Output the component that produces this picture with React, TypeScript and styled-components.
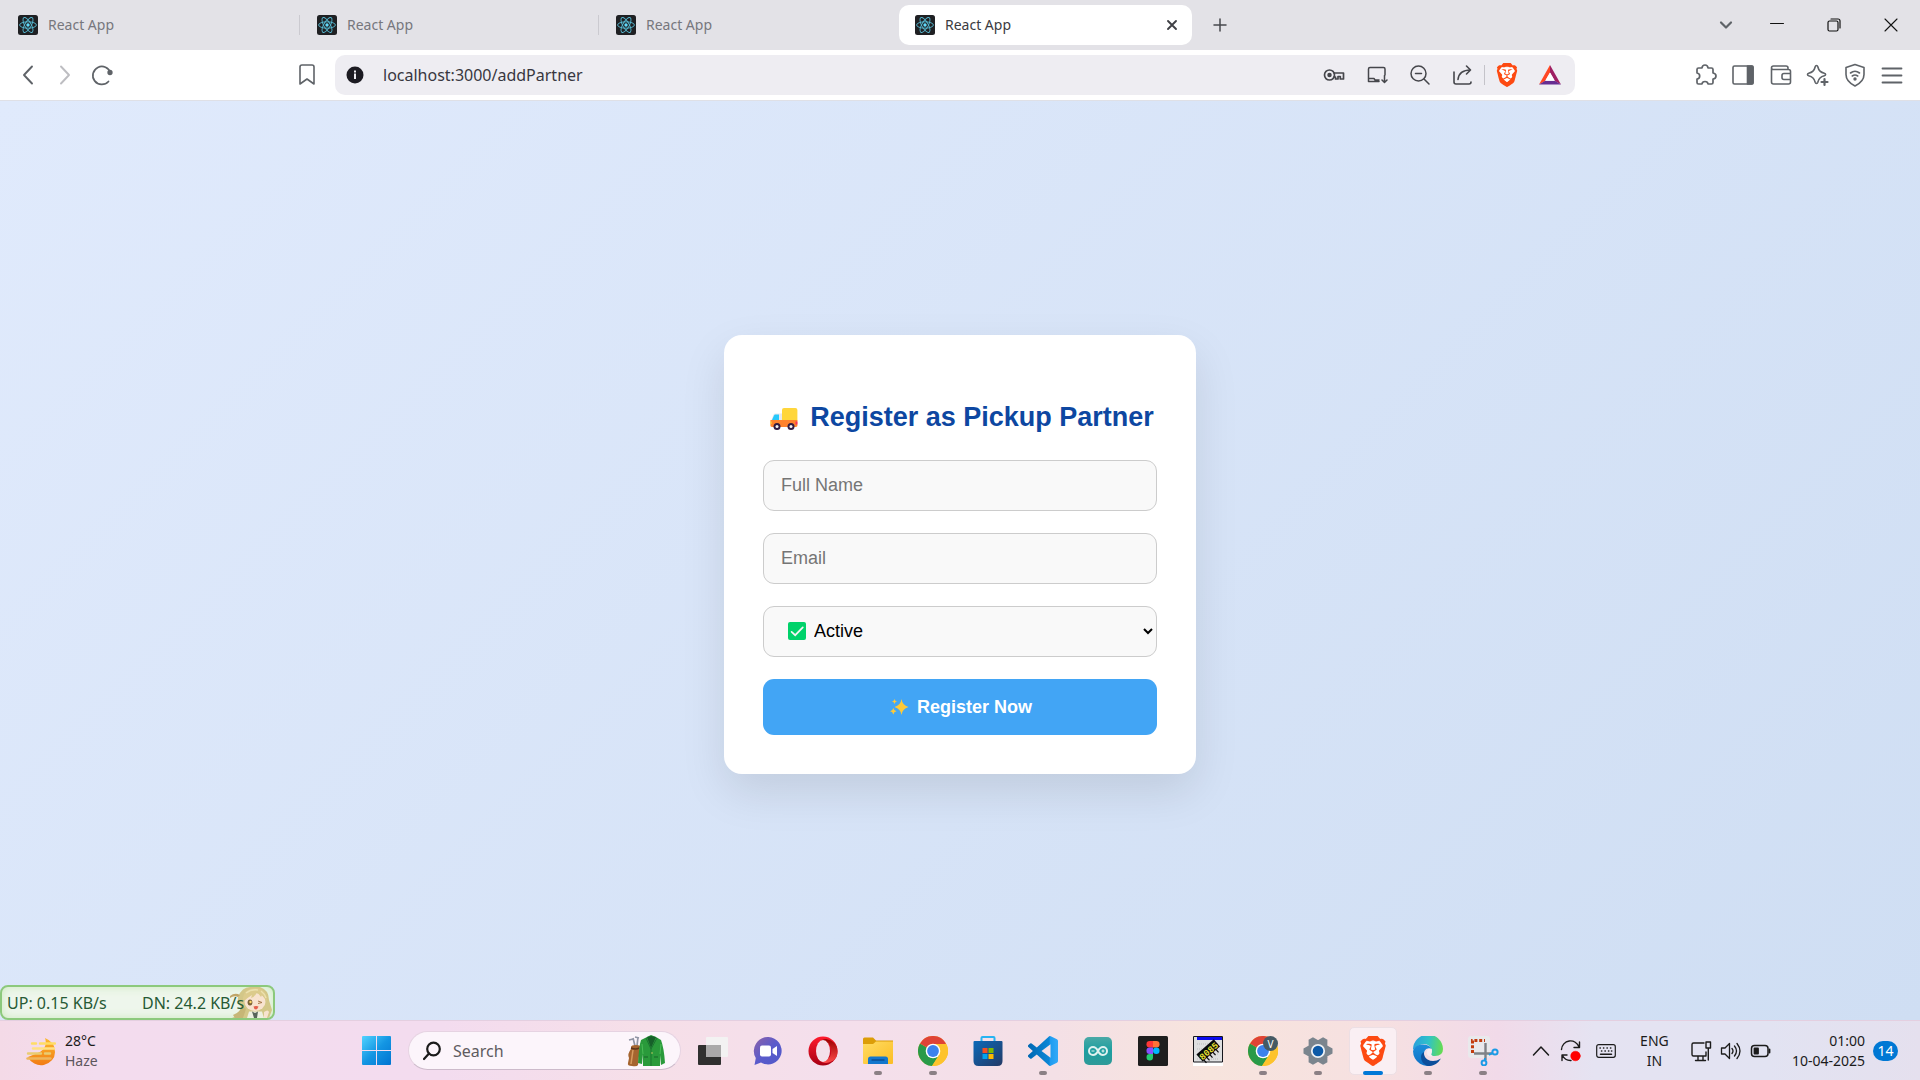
import React, { useState } from 'react';
import styled, { createGlobalStyle } from 'styled-components';
import { SiBrave } from 'react-icons/si';

const GlobalStyle = createGlobalStyle`
  *, *::before, *::after { box-sizing: border-box; }
  body { margin: 0; font-family: "Noto Sans", "Open Sans", sans-serif; }
  button { border: 0; padding: 0; background: none; color: inherit; font: inherit; cursor: pointer; }
  svg { display: block; flex: none; }
`;

const Screen = styled.div`
  display: flex;
  flex-direction: column;
  min-height: 100vh;
`;

/* ---------- browser chrome ---------- */

const TabStrip = styled.header`
  display: flex;
  align-items: center;
  height: 50px;
  padding: 0 1px 0 2px;
  background: #e3e2e7;
  color: #5f6368;
`;

const Tab = styled.div<{ $active?: boolean }>`
  display: flex;
  align-items: center;
  flex: 0 1 293px;
  min-width: 0;
  height: 40px;
  padding: 0 12px 0 16px;
  border-radius: 10px;
  background: ${p => (p.$active ? '#fff' : 'transparent')};
  color: ${p => (p.$active ? '#3b3b41' : '#77777d')};
`;

const TabTitle = styled.button`
  display: flex;
  align-items: center;
  gap: 10px;
  flex: 1;
  font-size: 14px;
  line-height: 20px;
`;

const TabDivider = styled.span<{ $hidden?: boolean }>`
  width: 1px;
  height: 20px;
  margin: 0 1px 0 4px;
  background: ${p => (p.$hidden ? 'transparent' : '#cbcad0')};
`;

const IconButton = styled.button<{ $w?: number; $color?: string }>`
  display: flex;
  align-items: center;
  justify-content: center;
  width: ${p => p.$w ?? 37}px;
  height: 40px;
  flex: none;
  color: ${p => p.$color ?? '#5f6368'};
`;

const CloseTab = styled(IconButton)`
  width: 16px;
  height: 20px;
`;

const WindowControls = styled.div`
  display: flex;
  margin-left: auto;
`;

const Toolbar = styled.nav`
  display: grid;
  grid-template-columns: 1fr minmax(0, 1240px) 1fr;
  align-items: center;
  height: 51px;
  padding-right: 10px;
  border-bottom: 1px solid #dfe0e6;
  background: #fff;
`;

const ToolGroup = styled.div<{ $end?: boolean }>`
  display: flex;
  align-items: center;
  justify-content: ${p => (p.$end ? 'flex-end' : 'flex-start')};
  padding: ${p => (p.$end ? '0' : '0 10px 0 9px')};
`;

const Spacer = styled.span`
  flex: 1;
`;

const AddressBar = styled.div`
  display: flex;
  align-items: center;
  height: 40px;
  padding: 0 4px 0 11px;
  border-radius: 10px;
  background: #eeedf2;
`;

const AddressInput = styled.input`
  flex: 1;
  min-width: 0;
  margin-left: 19px;
  padding: 0;
  border: 0;
  outline: 0;
  background: transparent;
  color: #38373f;
  font: 16px/24px "Noto Sans", "Open Sans", sans-serif;
`;

const BarDivider = styled.span`
  width: 1px;
  height: 20px;
  background: #c4c3c9;
`;

/* ---------- registration page ---------- */

const Page = styled.main`
  position: relative;
  display: flex;
  flex: 1;
  align-items: center;
  justify-content: center;
  padding: 24px 16px 36px;
  background: linear-gradient(135deg, #e0eafc, #cfdef3);
  font-family: "Liberation Sans", Arial, sans-serif;
`;

const Card = styled.form`
  display: flex;
  flex-direction: column;
  gap: 22px;
  width: 100%;
  max-width: 472px;
  padding: 39px;
  border-radius: 18px;
  background: #fff;
  box-shadow: 0 18px 45px rgba(0, 0, 0, 0.1);
`;

const Title = styled.h2`
  display: flex;
  align-items: center;
  justify-content: center;
  gap: 8px;
  margin: 25px 0 3px;
  color: #0d47a1;
  font-size: 27px;
  line-height: 36px;
  font-weight: 700;
  white-space: nowrap;
`;

const Field = styled.input`
  width: 100%;
  height: 51px;
  padding: 0 17px 1px;
  border: 1px solid #ccc;
  border-radius: 11px;
  background: #f9f9f9;
  color: #000;
  font: 18px "Liberation Sans", Arial, sans-serif;
  &::placeholder { color: #757575; }
`;

const SelectBox = styled.div`
  position: relative;
`;

const SelectMark = styled.span`
  position: absolute;
  top: 16px;
  left: 25px;
  pointer-events: none;
`;

const StatusSelect = styled.select`
  width: 100%;
  height: 51px;
  padding: 0 1px 1px 46px;
  border: 1px solid #ccc;
  border-radius: 11px;
  background: #f9f9f9;
  color: #000;
  font: 18px "Liberation Sans", Arial, sans-serif;
`;

const SubmitButton = styled.button`
  display: flex;
  align-items: center;
  justify-content: center;
  gap: 8px;
  height: 56px;
  padding-left: 2px;
  border-radius: 11px;
  background: #42a5f5;
  color: #fff;
  font: 700 18px "Liberation Sans", Arial, sans-serif;
`;

const NetMeter = styled.aside`
  position: absolute;
  left: 0;
  bottom: 0;
  display: flex;
  align-items: center;
  width: 275px;
  height: 35px;
  padding-left: 5px;
  border: 2px solid #8cc97c;
  border-radius: 8px;
  background: #eef6ec;
  box-shadow: inset 0 0 10px #cdeabf;
  color: #275a35;
  font: 16px/24px "Noto Sans", "Open Sans", sans-serif;
  white-space: nowrap;
  overflow: hidden;
`;

const NetValue = styled.span`
  position: relative;
  z-index: 1;
  flex: 0 0 135px;
`;

const Mascot = styled.svg`
  position: absolute;
  right: 0;
  bottom: 0;
`;

/* ---------- taskbar ---------- */

const Taskbar = styled.footer`
  display: flex;
  align-items: center;
  height: 60px;
  border-top: 1px solid #e4cfe0;
  background: linear-gradient(90deg, #f4dae7 0%, #f3dcee 5%, #f3dcef 23%, #f6dfe8 34%, #f4dfec 44%, #f4e0e6 55%, #f7e4dd 63%, #f6e0e1 72%, #f1dae9 78%, #e5e3f2 83%, #e2e3f2 92%, #e5e0ee 100%);
  color: #1b1b1b;
  font-size: 14px;
  line-height: 20px;
`;

const Weather = styled.button`
  display: flex;
  align-items: center;
  gap: 9px;
  flex: 0 0 349px;
  height: 100%;
  padding-left: 26px;
  text-align: left;
`;

const Stack = styled.span<{ $align?: string }>`
  display: flex;
  flex-direction: column;
  text-align: ${p => p.$align ?? 'left'};
`;

const Muted = styled.span`
  color: #5c565c;
`;

const AppCell = styled.button<{ $mark?: 'open' | 'active' }>`
  position: relative;
  display: flex;
  align-items: center;
  justify-content: center;
  flex: 0 1 55px;
  height: 48px;
  &::after {
    content: '';
    position: absolute;
    bottom: 0;
    width: ${p => (p.$mark === 'active' ? 20 : 8)}px;
    height: 4px;
    border-radius: 2px;
    background: ${p => (p.$mark === 'active' ? '#0078d7' : p.$mark ? '#8b8085' : 'transparent')};
  }
`;

const ActiveTile = styled.span`
  display: flex;
  align-items: center;
  justify-content: center;
  width: 48px;
  height: 48px;
  border: 1px solid #ecdfe4;
  border-radius: 5px;
  background: #faeff3;
`;

const SearchPill = styled.label`
  display: flex;
  align-items: center;
  flex: 0 1 273px;
  min-width: 0;
  height: 39px;
  margin: 0 4px;
  padding: 0 15px 0 14px;
  border: 1px solid #e6d3e2;
  border-bottom-color: #cdbbcb;
  border-radius: 20px;
  background: #fcf5fb;
`;

const SearchInput = styled.input`
  flex: 1;
  min-width: 0;
  margin-left: 12px;
  padding: 0;
  border: 0;
  outline: 0;
  background: transparent;
  font: 16px/24px "Noto Sans", "Open Sans", sans-serif;
  &::placeholder { color: #5f5b60; }
`;

const Tray = styled.div`
  display: flex;
  align-items: center;
  margin-left: auto;
  padding-right: 22px;
`;

const TrayButton = styled.button<{ $w: number }>`
  display: flex;
  align-items: center;
  justify-content: center;
  width: ${p => p.$w}px;
  height: 48px;
`;

const Clock = styled.button`
  margin: 0 8px 0 16px;
`;

const Badge = styled.button`
  width: 25px;
  height: 20px;
  border-radius: 10px;
  background: #0078d4;
  color: #fff;
  font-size: 14px;
  line-height: 20px;
`;

/* ---------- drawings ---------- */

const ReactIcon = () => (
  <svg width="20" height="20" viewBox="0 0 20 20">
    <rect width="20" height="20" rx="2.5" fill="#1f2023" />
    <g fill="none" stroke="#58bdd6" strokeWidth="0.9">
      <ellipse cx="10" cy="10" rx="8.4" ry="3.2" />
      <ellipse cx="10" cy="10" rx="8.4" ry="3.2" transform="rotate(60 10 10)" />
      <ellipse cx="10" cy="10" rx="8.4" ry="3.2" transform="rotate(120 10 10)" />
    </g>
    <circle cx="10" cy="10" r="1.7" fill="#61dafb" />
  </svg>
);

type LineProps = { w?: number; h?: number; sw?: number; children: React.ReactNode };
const Line = ({ w = 24, h = 24, sw = 1.6, children }: LineProps) => (
  <svg width={w} height={h} viewBox={`0 0 ${w} ${h}`} fill="none" stroke="currentColor" strokeWidth={sw} strokeLinecap="round" strokeLinejoin="round">
    {children}
  </svg>
);

const BatIcon = () => (
  <svg width="24" height="22" viewBox="0 0 24 22">
    <path d="M12 1 1 20.5l6.2-3.6L12 8.5z" fill="#ff4724" />
    <path d="M12 1v7.5l4.8 8.4 6.2 3.6z" fill="#9e1f63" />
    <path d="M1 20.5h22l-6.2-3.8H7.2z" fill="#662d91" />
    <path d="M12 8.5 7.2 16.8h9.6z" fill="#fff" />
  </svg>
);

/* The lion of SiBrave is a cut-out, so a white plate behind it fills the face. */
const Brave = ({ size }: { size: number }) => (
  <svg width={size} height={size} viewBox="0 0 24 24">
    <path d="M6 4.500h12l2 4-2.500 9L12 21.500 6.500 17.500 4 8.500z" fill="#fff" />
    <SiBrave size={24} color="#fd4a12" />
  </svg>
);

const Truck = () => (
  <svg width="36" height="28" viewBox="0 0 36 28">
    <path d="M5 18 7.3 12q.6-1.4 2-1.4H17V19H5z" fill="#e8e8ee" />
    <path d="M5.8 17.5 8 12.4q.4-.9 1.3-.9H13v6z" fill="#26c9fc" />
    <rect x="16" y="5" width="15.400" height="14" rx="2" fill="#ffd63b" />
    <path d="M4.400 17h27v5.600q0 1.400-1.400 1.400H5.800q-1.400 0-1.400-1.400z" fill="#ff822d" />
    <path d="M29.500 18.500h1.900v3h-1.900z" fill="#f92f60" />
    <path d="M4.400 18.500h1.200v2.500H4.400z" fill="#fcd53f" />
    <circle cx="11" cy="23.500" r="3.500" fill="#321b41" />
    <circle cx="11" cy="23.500" r="1.500" fill="#f4f4f4" />
    <circle cx="25" cy="23.500" r="3.500" fill="#321b41" />
    <circle cx="25" cy="23.500" r="1.500" fill="#f4f4f4" />
  </svg>
);

const CheckMark = () => (
  <svg width="18" height="18" viewBox="0 0 18 18">
    <rect width="18" height="18" rx="2" fill="#00d26a" />
    <path d="m3.600 9.800 3.600 3.400 7.600-7.800" fill="none" stroke="#f4f4f4" strokeWidth="1.700" strokeLinecap="round" />
  </svg>
);

const Sparkles = () => (
  <svg width="19" height="18" viewBox="0 0 19 18" fill="#fcc93a">
    <path d="M11.500 1q.8 6.200 7 8-6.200 1.800-7 8-.8-6.200-7-8 6.200-1.800 7-8z" />
    <path d="M4.500 1q.4 2.100 2.500 2.500-2.100.4-2.500 2.500Q4.100 3.900 2 3.500 4.100 3.100 4.500 1zM3.300 10q.6 2.700 3.200 3.200-2.600.5-3.200 3.300-.5-2.800-3.200-3.300Q2.800 12.700 3.300 10z" />
  </svg>
);

const MascotDrawing = () => (
  <Mascot width="44" height="31" viewBox="0 0 44 31" aria-hidden="true">
    <path d="M9 10Q13 0 21 0h10q9 3 9 13l3 10-3 8H3q8-3 9-11-4-4-3-10z" fill="#d3c788" />
    <path d="M1 9q5-4 10-1l-2 2q-4-2-8 1z" fill="#c0a568" />
    <path d="M4 28q8-3 9-10l4 4-3 9H6z" fill="#c6b676" />
    <ellipse cx="26" cy="15" rx="10.500" ry="9" fill="#f8e3cf" />
    <path d="M14 15q-1-13 12-14 12 0 12 14-2-5-5-7l-1 2-4-5q-2 5-6 6l1-3q-5 3-9 7z" fill="#dccb8c" />
    <path d="M17 6q5-4 12-3M32 4q4 3 5 7" stroke="#ece1ae" strokeWidth="1.500" fill="none" />
    <ellipse cx="21" cy="15.500" rx="2.400" ry="3" fill="#7b6237" />
    <circle cx="21.500" cy="15" r="1.200" fill="#ffd96a" />
    <path d="m29 14 4 1.500-4 1" fill="none" stroke="#a87949" />
    <path d="M24.500 19.500q3-1 5 0-1 3-2.700 3t-2.300-3z" fill="#e45e4d" />
    <path d="M20 24.500h13l2 6.500H18z" fill="#eef0e0" />
    <path d="m23 24.500 3 1.500 3-1.500-1 6.500h-3z" fill="#576459" />
    <path d="M35 25q4-3 5 0l-2 6h-3z" fill="#f8e3cf" />
  </Mascot>
);

const WeatherIcon = () => (
  <svg width="30" height="30" viewBox="0 0 30 30">
    <defs>
      <linearGradient id="haze" x1="0" y1="0" x2="0" y2="1">
        <stop offset="0" stopColor="#fbb92f" />
        <stop offset="1" stopColor="#f27c14" />
      </linearGradient>
    </defs>
    <path d="M19 2q10 4 10 14a14 13 0 0 1-27 5l12-5q8-5 5-14z" fill="url(#haze)" />
    <g strokeLinecap="round" strokeWidth="2.400">
      <path d="M6 7.500h4M14 7.500h15" stroke="#ffdd65" />
      <path d="M7 12.500h21" stroke="#ffe184" />
      <path d="M2 17.500h13M19 17.500h5" stroke="#e9cc72" />
      <path d="M1.500 22.500h23" stroke="#eeb65d" />
    </g>
  </svg>
);

const StartIcon = () => (
  <svg width="29" height="29" viewBox="0 0 29 29">
    <defs>
      <linearGradient id="win" x1="0" y1="0" x2="1" y2="1">
        <stop offset="0" stopColor="#52d3ff" />
        <stop offset="0.5" stopColor="#1496e3" />
        <stop offset="1" stopColor="#0074d1" />
      </linearGradient>
    </defs>
    <path d="M1 0h13v14H0V1q0-1 1-1zM15 0h13q1 0 1 1v13H15zM0 15h14v14H1q-1 0-1-1zM15 15h14v13q0 1-1 1H15z" fill="url(#win)" />
  </svg>
);

const GolfIcon = () => (
  <svg width="38" height="32" viewBox="0 0 38 32">
    <path d="m8 11-2-8M10 11l1-9M6 4 2 5M12 3l-4-1" stroke="#9195a5" strokeWidth="1.700" fill="none" />
    <path d="M4 12q0-2 5-2t4 2l-2 18q-1 2-6 1-5 0-4-3l1-5q-2-4 2-9z" fill="#a5642f" />
    <path d="M4 13q5 2 8 0" stroke="#5e351b" strokeWidth="1.600" fill="none" />
    <path d="M6 15 4 29" stroke="#d79a5f" strokeWidth="1.500" />
    <path d="m20 2 4-2 5 2 5 3q3 8 4 23l-4 2-1-10v11H16V19l-1 10-4-1q1-17 3-23z" fill="#2a9a3b" />
    <path d="m20 2 4 11 5-11-5-1z" fill="#17602a" />
    <path d="m19 3 5 11 6-11M24 14v17" stroke="#1b7430" fill="none" />
    <path d="M17 22h4M27 22h4" stroke="#176429" />
    <path d="m15 9 1 10M34 9l-1 10" stroke="#4bbd57" fill="none" />
    <circle cx="25" cy="18" r=".7" fill="#efd66d" />
  </svg>
);

const TaskViewIcon = () => (
  <svg width="30" height="30" viewBox="0 0 30 30">
    <rect y="9" width="23" height="20" rx="1" fill="#30302f" />
    <rect x="8" y="1" width="22" height="20" rx="1" fill="#f3f2f2" />
    <path d="M8 9h15v12H8z" fill="#aaa9a9" />
  </svg>
);

const ChatIcon = () => (
  <svg width="30" height="30" viewBox="0 0 30 30">
    <defs>
      <linearGradient id="chat" x1="0" y1="0" x2="1" y2="1">
        <stop offset="0" stopColor="#8d62a8" />
        <stop offset="0.5" stopColor="#5a5bcb" />
        <stop offset="1" stopColor="#5059c9" />
      </linearGradient>
    </defs>
    <path d="M15.500 1A13.700 13.700 0 1 1 8 26.500L1.500 29l1.300-7A14 14 0 0 1 15.500 1z" fill="url(#chat)" />
    <rect x="7" y="9.500" width="11" height="11" rx="2" fill="#fff" />
    <path d="m19.500 13 4.500-3v10l-4.500-3z" fill="#fff" />
  </svg>
);

const OperaIcon = () => (
  <svg width="30" height="30" viewBox="0 0 30 30">
    <defs>
      <linearGradient id="opA" x1="0" y1="0" x2="0" y2="1">
        <stop offset="0" stopColor="#ff1b2d" />
        <stop offset="1" stopColor="#a70014" />
      </linearGradient>
      <linearGradient id="opB" x1="0" y1="0" x2="0" y2="1">
        <stop offset="0" stopColor="#9c0000" />
        <stop offset="1" stopColor="#ff4b4b" />
      </linearGradient>
    </defs>
    <ellipse cx="15" cy="15" rx="14.500" ry="14.500" fill="url(#opA)" />
    <path d="M11 6.500Q14 3 18 3q11 2 11.500 12T18 27q-4 0-7-3.500 7 2.500 11-3 2.500-5.500 0-11-4-5.500-11-3z" fill="url(#opB)" />
    <ellipse cx="15" cy="15" rx="7" ry="11" fill="#f4e0ea" />
  </svg>
);

const FolderIcon = () => (
  <svg width="30" height="28" viewBox="0 0 30 28">
    <defs>
      <linearGradient id="fold" x1="0" y1="0" x2="1" y2="1">
        <stop offset="0" stopColor="#ffdc63" />
        <stop offset="1" stopColor="#fbbd24" />
      </linearGradient>
    </defs>
    <path d="M0 2q0-1.500 1.500-1.500H10l3 3H30v10H0z" fill="#dc9d08" />
    <path d="M0 7h10l3-2.500h17V26q0 1-1 1H1q-1 0-1-1z" fill="url(#fold)" />
    <path d="M5 27v-5q0-2.500 2.500-2.500h15Q25 19.500 25 22v5z" fill="#1377cd" />
    <path d="M9 23h12" stroke="#0b4f94" strokeWidth="1.400" strokeLinecap="round" />
  </svg>
);

const ChromeIcon = ({ badge }: { badge?: string }) => (
  <svg width="30" height="30" viewBox="0 0 30 30">
    <circle cx="15" cy="15" r="15" fill="#fdc32c" />
    <path d="M15 15 2 7.500A15 15 0 0 0 14 30l7.500-11z" fill="#299a48" />
    <path d="M15 15 2 7.500a15 15 0 0 1 26 0z" fill="#df4336" />
    <path d="M15 8h13.300A15 15 0 0 1 14 30l7.500-12z" fill="#fdc32c" />
    <circle cx="15" cy="15" r="7.300" fill="#fff" />
    <circle cx="15" cy="15" r="5.900" fill="#3b82ed" />
    {badge && (
      <>
        <circle cx="22.500" cy="7.500" r="7.500" fill="#455a64" />
        <text x="22.500" y="11.500" textAnchor="middle" fontSize="10" fill="#fff" fontFamily="Noto Sans, sans-serif">{badge}</text>
      </>
    )}
  </svg>
);

const StoreIcon = () => (
  <svg width="30" height="30" viewBox="0 0 30 30">
    <defs>
      <linearGradient id="store" x1="0" y1="0" x2="1" y2="1">
        <stop offset="0" stopColor="#0b69b8" />
        <stop offset="1" stopColor="#243a66" />
      </linearGradient>
    </defs>
    <path d="M8.500 7V2q0-1 1-1h11q1 0 1 1v5" fill="none" stroke="#27b4f2" strokeWidth="2" />
    <path d="M.5 6q0-1 1-1h27q1 0 1 1v19q0 5-5 5h-19q-5 0-5-5z" fill="url(#store)" />
    <path d="M9.500 12h5v5h-5z" fill="#f25022" />
    <path d="M15.500 12h5v5h-5z" fill="#7fba00" />
    <path d="M9.500 18h5v5h-5z" fill="#00a4ef" />
    <path d="M15.500 18h5v5h-5z" fill="#ffb900" />
  </svg>
);

const CodeIcon = () => (
  <svg width="30" height="30" viewBox="0 0 24 24">
    <defs>
      <linearGradient id="code" x1="0" x2="1">
        <stop offset="0" stopColor="#0068b3" />
        <stop offset="0.7" stopColor="#0a86d6" />
        <stop offset="0.75" stopColor="#1f9cf0" />
        <stop offset="1" stopColor="#33a9f8" />
      </linearGradient>
    </defs>
    <path
      fill="url(#code)"
      d="M23.15 2.587L18.21.21a1.494 1.494 0 0 0-1.705.29l-9.46 8.63-4.12-3.128a.999.999 0 0 0-1.276.057L.327 7.261A1 1 0 0 0 .326 8.74L3.899 12 .326 15.26a1 1 0 0 0 .001 1.479L1.65 17.94a.999.999 0 0 0 1.276.057l4.12-3.128 9.46 8.63a1.492 1.492 0 0 0 1.704.29l4.942-2.377A1.5 1.5 0 0 0 24 20.06V3.939a1.5 1.5 0 0 0-.85-1.352zm-5.146 14.861L10.826 12l7.178-5.448v10.896z"
    />
  </svg>
);

const ArduinoIcon = () => (
  <svg width="28" height="28" viewBox="0 0 28 28">
    <defs>
      <linearGradient id="ard" x1="0" y1="0" x2="0" y2="1">
        <stop offset="0" stopColor="#4aa9a6" />
        <stop offset="0.5" stopColor="#1c9ea0" />
        <stop offset="1" stopColor="#2f9a98" />
      </linearGradient>
    </defs>
    <rect width="28" height="28" rx="5" fill="url(#ard)" />
    <path d="M14 14q-2-4-5-4a4 4 0 0 0 0 8q3 0 5-4t5-4a4 4 0 0 1 0 8q-3 0-5-4z" fill="none" stroke="#dff1ef" strokeWidth="2" />
    <path d="M7.500 14h3M17.500 14h3M19 12.500v3" stroke="#dff1ef" strokeWidth="1.200" />
  </svg>
);

const FigmaIcon = () => (
  <svg width="30" height="30" viewBox="0 0 30 30">
    <rect width="30" height="30" rx="1.500" fill="#1e1e1e" />
    <path d="M15 5h-3.300a3.250 3.250 0 0 0 0 6.500H15z" fill="#ff3737" />
    <path d="M15 5h3.300a3.250 3.250 0 0 1 0 6.500H15z" fill="#ff7237" />
    <path d="M15 11.500h-3.300a3.250 3.250 0 0 0 0 6.500H15z" fill="#874fff" />
    <circle cx="18.300" cy="14.750" r="3.250" fill="#00b6ff" />
    <path d="M15 18h-3.300a3.250 3.250 0 1 0 3.300 3.250z" fill="#24cb71" />
  </svg>
);

const ChipIcon = () => (
  <svg width="30" height="30" viewBox="0 0 30 30">
    <path d="M0 0h30v30H0z" fill="#fff" />
    <path d="M.5.5h29v25.500H.5z" fill="#dedfe0" stroke="#16161c" />
    <path d="M4 1h25v3H4z" fill="#0b0bee" />
    <path d="M4 8h22M4 13h22M4 18h22M4 23h22" stroke="#b9bbbd" strokeDasharray="1 1" />
    <g transform="rotate(-41 15 15)">
      <path d="M4 10h23v9.500H4z" fill="#08080a" />
      <path d="M6 18v5M10 18v5M14 18v5M18 18v5M22 18v5" stroke="#08080a" strokeWidth="1.200" />
      <text x="15.500" y="18.500" textAnchor="middle" fontSize="9" fontWeight="700" fill="#e8e332" fontFamily="Liberation Mono, monospace">8085</text>
    </g>
  </svg>
);

const GearIcon = () => (
  <svg width="30" height="30" viewBox="0 0 30 30">
    <g fill="#7b858e">
      <circle cx="15" cy="15" r="11" />
      {[0, 60, 120].map(a => (
        <path key={a} d="M.5 12.500 5 10h20l4.500 2.500v5L25 20H5L.5 17.500z" transform={`rotate(${a} 15 15)`} />
      ))}
    </g>
    <circle cx="15" cy="15" r="6.200" fill="#0d5aa7" stroke="#eef1f4" strokeWidth="1.800" />
  </svg>
);

const EdgeIcon = () => (
  <svg width="30" height="30" viewBox="0 0 30 30">
    <defs>
      <linearGradient id="edT" x1="0" y1="0.4" x2="1" y2="0.5">
        <stop offset="0" stopColor="#2aa0dd" />
        <stop offset="0.5" stopColor="#2fc2c8" />
        <stop offset="1" stopColor="#66dc50" />
      </linearGradient>
      <linearGradient id="edL" x1="0" y1="0" x2="0" y2="1">
        <stop offset="0" stopColor="#1c8fdb" />
        <stop offset="1" stopColor="#1070c4" />
      </linearGradient>
    </defs>
    <path d="M0 14A15 15 0 0 1 30 13q0 7-8 7-4 0-4-2 2-3 0-6-4-6-11-3-5 2-7 5z" fill="url(#edT)" />
    <path d="M0 15Q2 8.500 9.500 8.500 17 8.500 18.500 13q-5-2-7 2-2 6 3 10 3 3 7 3.500A15 15 0 0 1 0 15z" fill="url(#edL)" />
    <path d="M11 16q-.5 5 3.500 7.500 6 3.500 13.500-1-5 8-13 7.500-7-2.500-7-9 0-3.500 3-5z" fill="#0d4f9b" />
    <path d="M14 14.500q2-3 4.500-1.500 1 2 0 4.500-1 1.500 1 2.700-4 .8-5.500-2-.7-2 0-3.700z" fill="#f7ecf2" />
  </svg>
);

const SnipIcon = () => (
  <svg width="32" height="30" viewBox="0 0 32 30">
    <rect x="1" width="22" height="22" rx="3" fill="#e9e9ec" />
    <path d="M5.500 17V4.500H18" fill="none" stroke="#c33d0f" strokeWidth="3" strokeDasharray="3 1.800" />
    <path d="M18.500 7v17M7 17.500h18" stroke="#7e8287" strokeWidth="2.400" />
    <g fill="none" stroke="#1b9be6" strokeWidth="2">
      <circle cx="28" cy="16" r="2.600" />
      <circle cx="17" cy="27" r="2.400" />
      <path d="m22 19 3-2M18 22v2.500" />
    </g>
  </svg>
);

const apps: { name: string; icon: React.ReactNode; mark?: 'open' | 'active' }[] = [
  { name: 'Task view', icon: <TaskViewIcon /> },
  { name: 'Chat', icon: <ChatIcon /> },
  { name: 'Opera', icon: <OperaIcon /> },
  { name: 'File Explorer', icon: <FolderIcon />, mark: 'open' },
  { name: 'Chrome', icon: <ChromeIcon />, mark: 'open' },
  { name: 'Store', icon: <StoreIcon /> },
  { name: 'Visual Studio Code', icon: <CodeIcon />, mark: 'open' },
  { name: 'Arduino', icon: <ArduinoIcon /> },
  { name: 'Figma', icon: <FigmaIcon /> },
  { name: '8085 Simulator', icon: <ChipIcon /> },
  { name: 'Chrome profile', icon: <ChromeIcon badge="V" />, mark: 'open' },
  { name: 'Settings', icon: <GearIcon />, mark: 'open' },
  { name: 'Brave', icon: <ActiveTile><Brave size={30} /></ActiveTile>, mark: 'active' },
  { name: 'Edge', icon: <EdgeIcon />, mark: 'open' },
  { name: 'Snipping Tool', icon: <SnipIcon />, mark: 'open' },
];

const BrowserTabs = () => (
  <TabStrip>
    {[0, 1, 2].map(i => (
      <React.Fragment key={i}>
        <Tab><TabTitle><ReactIcon />React App</TabTitle></Tab>
        <TabDivider $hidden={i === 2} />
      </React.Fragment>
    ))}
    <Tab $active>
      <TabTitle><ReactIcon />React App</TabTitle>
      <CloseTab aria-label="Close tab" $color="#3f4045"><Line w={12} h={12} sw={1.9}><path d="m2 2 8 8M10 2l-8 8" /></Line></CloseTab>
    </Tab>
    <IconButton aria-label="New tab" $w={56} $color="#47484d"><Line w={14} h={14} sw={1.5}><path d="M7 1v12M1 7h12" /></Line></IconButton>
    <WindowControls>
      <IconButton aria-label="Search tabs" $w={45}><Line w={14} h={10} sw={2.2}><path d="m2 2.500 5 5 5-5" /></Line></IconButton>
      <IconButton aria-label="Minimize" $w={57} $color="#111"><Line w={14} h={14} sw={1}><path d="M.5 5.500h13" /></Line></IconButton>
      <IconButton aria-label="Restore" $w={57} $color="#111"><Line w={14} h={14} sw={1.2}><rect x="1" y="3" width="10" height="10" rx="1.500" /><path d="M4 1h7q2 0 2 2v7" /></Line></IconButton>
      <IconButton aria-label="Close" $w={57} $color="#111"><Line w={14} h={14} sw={1.1}><path d="m1 1 12 12M13 1 1 13" /></Line></IconButton>
    </WindowControls>
  </TabStrip>
);

const BrowserToolbar = () => {
  const [url, setUrl] = useState('localhost:3000/addPartner');
  return (
    <Toolbar>
      <ToolGroup>
        <IconButton aria-label="Back"><Line w={22} sw={1.9}><path d="M15 3.500 7 12l8 8.500" /></Line></IconButton>
        <IconButton aria-label="Forward" $color="#bdbdc1"><Line w={22} sw={1.9}><path d="m7 3.500 8 8.500-8 8.500" /></Line></IconButton>
        <IconButton aria-label="Reload"><Line sw={1.7}><path d="M20.500 10A9 9 0 1 0 18.500 18.500" /><circle cx="20" cy="9.500" r="1.800" fill="currentColor" /></Line></IconButton>
        <Spacer />
        <IconButton aria-label="Bookmark"><Line><path d="M5 4q0-2 2-2h10q2 0 2 2v17l-7-5-7 5z" /></Line></IconButton>
      </ToolGroup>
      <AddressBar>
        <svg width="18" height="18" viewBox="0 0 18 18">
          <circle cx="9" cy="9" r="8.500" fill="#1c1b22" />
          <path d="M8 7.500h2V13H8zM8 4.500h2v2H8z" fill="#eeedf2" />
        </svg>
        <AddressInput aria-label="Address" value={url} onChange={e => setUrl(e.target.value)} spellCheck={false} />
        <IconButton aria-label="Passwords" $w={43} $color="#45464b"><Line w={22} h={20} sw={1.7}><circle cx="6.500" cy="10" r="5" /><circle cx="6.500" cy="10" r="1.400" fill="currentColor" /><path d="M11 8h9.500v6h-3.200v-2.500H15V14h-2.500v-2H11" /></Line></IconButton>
        <IconButton aria-label="Install app" $w={43} $color="#45464b"><Line w={22} h={20} sw={1.5}><path d="M19 10V4q0-1.500-1.500-1.500H4Q2.500 2.500 2.500 4v12.500H13M2.500 13.500H8l1 1.500h4M18.500 10.500v6.500M16 15l2.500 2.500L21 15" /></Line></IconButton>
        <IconButton aria-label="Zoom" $w={43} $color="#45464b"><Line w={22} h={22} sw={1.5}><circle cx="9.500" cy="9.500" r="7.500" /><path d="m15 15 5 5M6.500 9.500h6" /></Line></IconButton>
        <IconButton aria-label="Share" $w={43} $color="#45464b"><Line w={22} h={22} sw={1.6}><path d="M2 8v10q0 2 2 2h13q2 0 2-2M6 15.500Q7 6 18.500 6M14.500 2l4 4-4 4" /></Line></IconButton>
        <BarDivider />
        <IconButton aria-label="Brave Shields" $w={43}><Brave size={24} /></IconButton>
        <IconButton aria-label="Brave Rewards" $w={43}><BatIcon /></IconButton>
      </AddressBar>
      <ToolGroup $end>
        <IconButton aria-label="Extensions"><Line sw={1.7}><path d="M2 6.500Q2 5 3.500 5H7q.3-3 3-3t3 3h3.500Q18 5 18 6.500V10q3 .300 3 3t-3 3v3.500q0 1.500-1.500 1.500H13q-.3-2.500-3-2.500T7 21H3.500Q2 21 2 19.500V16q2.700-.3 2.700-3T2 10z" /></Line></IconButton>
        <IconButton aria-label="Sidebar"><Line sw={1.6}><rect x="1" y="3" width="20" height="18" rx="1.500" /><path d="M15.500 3H20q1 0 1 1v16q0 1-1 1h-4.500z" fill="currentColor" /></Line></IconButton>
        <IconButton aria-label="Wallet"><Line sw={1.600}><path d="M2.500 5.500V19q0 2 2 2h15q2 0 2-2V8.500q0-2-2-2h-16q-1-.5-1-1.700Q2.500 3 4.500 3H17q2 0 2 2v1.500M21.500 10.500H15q-2 0-2 2v2q0 2 2 2h6.500" /></Line></IconButton>
        <IconButton aria-label="Leo AI"><Line sw={1.600}><path d="M10.500 2.500q1 0 1.300 1.200 1.200 5.300 6.500 6.500 1.300.3 1.300 1.300t-1.300 1.300q-5.300 1.200-6.500 6.500-.3 1.200-1.300 1.200t-1.300-1.200q-1.200-5.300-6.500-6.500-1.200-.3-1.200-1.300t1.200-1.300q5.300-1.200 6.500-6.500.3-1.200 1.300-1.200z" fill="none" /><path d="M18.500 17v4M16.500 19h4" stroke="#fff" strokeWidth="6" /><path d="M18.500 16v6M15.500 19h6" strokeWidth="2.200" /></Line></IconButton>
        <IconButton aria-label="VPN"><Line sw={1.600}><path d="m12 1.500 9 3v7q0 7-9 11.500-9-4.500-9-11.500v-7z" /><path d="M7.500 10q4.500-3.500 9 0M9.300 13q2.700-2 5.400 0" /><circle cx="12" cy="16" r=".9" fill="currentColor" /></Line></IconButton>
        <IconButton aria-label="Menu"><Line sw={1.800}><path d="M2.500 5.500h19M2.500 12.500h19M2.500 19.500h19" /></Line></IconButton>
      </ToolGroup>
    </Toolbar>
  );
};

const RegisterPage = () => (
  <Page>
    <Card onSubmit={e => e.preventDefault()}>
      <Title><Truck />Register as Pickup Partner</Title>
      <Field type="text" placeholder="Full Name" aria-label="Full Name" />
      <Field type="email" placeholder="Email" aria-label="Email" />
      <SelectBox>
        <StatusSelect aria-label="Status" defaultValue="active">
          <option value="active">Active</option>
        </StatusSelect>
        <SelectMark><CheckMark /></SelectMark>
      </SelectBox>
      <SubmitButton type="submit"><Sparkles />Register Now</SubmitButton>
    </Card>
    <NetMeter>
      <NetValue>UP: 0.15 KB/s</NetValue>
      <NetValue>DN: 24.2 KB/s</NetValue>
      <MascotDrawing />
    </NetMeter>
  </Page>
);

const DesktopTaskbar = () => (
  <Taskbar>
    <Weather>
      <WeatherIcon />
      <Stack><span>28°C</span><Muted>Haze</Muted></Stack>
    </Weather>
    <AppCell aria-label="Start"><StartIcon /></AppCell>
    <SearchPill>
      <Line w={18} h={20} sw={2.200}><circle cx="10.500" cy="8" r="6.300" /><path d="m6 12.500-5 5.500" /></Line>
      <SearchInput placeholder="Search" aria-label="Search" />
      <GolfIcon />
    </SearchPill>
    {apps.map(a => (
      <AppCell key={a.name} aria-label={a.name} $mark={a.mark}>{a.icon}</AppCell>
    ))}
    <Tray>
      <TrayButton $w={24} aria-label="Hidden icons"><Line w={18} h={12} sw={1.500}><path d="m1.500 10 7.500-8 7.500 8" /></Line></TrayButton>
      <TrayButton $w={36} aria-label="Sync">
        <Line w={22} h={22} sw={1.400}><path d="M1.500 9.500A9 9 0 0 1 19 7M19.500 2v5.500H14M2 20.500V15h5M2.500 15.500A9 9 0 0 0 11 20.500" /><circle cx="15.500" cy="16" r="4.800" fill="#f00" stroke="#f00" strokeWidth="0.5" /></Line>
      </TrayButton>
      <TrayButton $w={34} aria-label="Touch keyboard">
        <Line w={20} h={14} sw={1.200}><rect x=".7" y=".7" width="18.600" height="12.600" rx="2" /><path d="M4 4h.3M7.500 4h.3M11 4h.3M14.500 4h.3M5.500 7h.3M9 7h.3M12.500 7h.3M15.500 7h.3M4.500 10.300h11" strokeWidth="1.500" /></Line>
      </TrayButton>
      <TrayButton $w={63} aria-label="Language"><Stack $align="center"><span>ENG</span><span>IN</span></Stack></TrayButton>
      <TrayButton $w={30} aria-label="Network">
        <Line w={22} h={22} sw={1.400}><path d="M14 3H3.500Q2 3 2 4.500v10Q2 16 3.500 16H16v-4M8 16v4M13 16v4M5.500 20.500h10" /><path d="M16 2h4.500v6H16zM18.300 8v12" /></Line>
      </TrayButton>
      <TrayButton $w={30} aria-label="Volume">
        <Line w={22} h={20} sw={1.300}><path d="M1.500 7H5l4.500-4.500v15L5 13H1.500zM12 7.500q2 2.500 0 5M14.500 5q4 5 0 10M17 2.500q6 7.500 0 15" /></Line>
      </TrayButton>
      <TrayButton $w={30} aria-label="Battery">
        <Line w={22} h={14} sw={1.500}><rect x="1.500" y="1.500" width="16.500" height="11" rx="3" /><path d="M4.500 4.500H8v5H4.500zM19.500 5.500v3" fill="currentColor" strokeWidth="1.800" /></Line>
      </TrayButton>
      <Clock><Stack $align="right"><span>01:00</span><span>10-04-2025</span></Stack></Clock>
      <Badge aria-label="14 notifications">14</Badge>
    </Tray>
  </Taskbar>
);

export default function App() {
  return (
    <Screen>
      <GlobalStyle />
      <BrowserTabs />
      <BrowserToolbar />
      <RegisterPage />
      <DesktopTaskbar />
    </Screen>
  );
}
